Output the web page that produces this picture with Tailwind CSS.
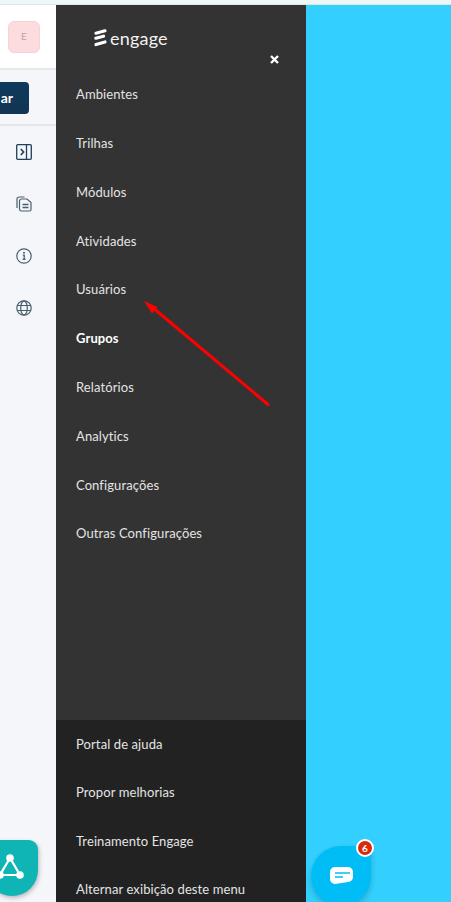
<!DOCTYPE html>
<html lang="pt-BR">
<head>
  <meta charset="UTF-8">
  <title>Engage</title>
  <script src="https://cdn.jsdelivr.net/npm/@tailwindcss/browser@4"></script>
</head>
<body class="h-[902px] w-[451px] overflow-hidden bg-[#33d0ff] font-['Lato',sans-serif] relative">

  <div class="h-[5px] bg-[#eef7f8] border-b border-[#dfe6e8]"></div>

  <div class="flex h-[897px]">
    <!-- Coluna esquerda -->
    <div class="w-[56px] bg-[#f4f6f9] relative overflow-hidden">
      <div class="h-[65px] bg-white border-b-2 border-[#e6e8ec] flex items-center pl-2">
        <div class="w-8 h-8 rounded-md bg-[#fddcdf] border border-[#fbd0d4] flex items-center justify-center text-[10px] text-[#c9a0a5]">E</div>
      </div>
      <div class="h-[56px] border-b-2 border-[#e4e6ea] flex items-center justify-end pr-[27px] pt-[1px]">
        <div class="w-[60px] shrink-0 h-8 rounded bg-gradient-to-b from-[#0e3a5c] to-[#123553] flex items-center justify-end pr-[16px] text-white text-[14px] font-bold">ar</div>
      </div>

      <div class="flex flex-col items-center gap-[36px] mt-[18px] pr-[8px]">
        <svg class="w-4 h-4" viewBox="0 0 16 16" fill="none" stroke="#1f3f5c" stroke-width="1.3">
          <rect x="0.7" y="0.7" width="14.6" height="14.6" rx="1"/>
          <path d="M10.5 0.7V15.3"/>
          <path d="M4.8 5L7.6 8L4.8 11" stroke-width="1.6"/>
        </svg>
        <svg class="w-4 h-4" viewBox="0 0 16 16" fill="none" stroke="#4a5f6e" stroke-width="1.2">
          <path d="M1 12V3a2 2 0 0 1 2-2H8.500"/>
          <path d="M3.500 5a2 2 0 0 1 2-2H11L15 6.500V13.500a1.500 1.500 0 0 1-1.500 1.500H5.500a2 2 0 0 1-2-2Z"/>
          <path d="M6.500 8.500H12.500M6.500 11.500H12.500" stroke-width="1.300"/>
        </svg>
        <svg class="w-4 h-4" viewBox="0 0 16 16" fill="none" stroke="#4a5f6e" stroke-width="1.200">
          <circle cx="8" cy="8" r="7.200"/>
          <circle cx="8" cy="4.800" r="1" fill="#4a5f6e" stroke="none"/>
          <path d="M6.800 7.200H8.200V11.200M6.600 11.300H9.600" stroke-width="1.300"/>
        </svg>
        <svg class="w-4 h-4" viewBox="0 0 16 16" fill="none" stroke="#4a5f6e" stroke-width="1.200">
          <circle cx="8" cy="8" r="7.200"/>
          <ellipse cx="8" cy="8" rx="3.300" ry="7.200"/>
          <path d="M1.200 5.500H14.800M1.200 10.500H14.800"/>
        </svg>
      </div>

      <!-- Botão teal -->
      <div class="absolute left-[-14px] top-[835px] w-[52px] h-[56px] bg-[#0fb5b5] rounded-tl-[10px] rounded-tr-[10px] rounded-bl-[28px] rounded-br-[28px] shadow-[1px_2px_4px_rgba(0,0,0,0.25)] flex items-center justify-center">
        <svg class="w-[30px] h-[30px] mr-[4px]" viewBox="0 0 30 30" fill="none" stroke="white" stroke-width="2.200">
          <path d="M15 5L5 22H25Z"/>
          <circle cx="15" cy="5" r="3.800" fill="white" stroke="none"/>
          <circle cx="5" cy="22" r="3.800" fill="white" stroke="none"/>
          <circle cx="25" cy="22" r="3.800" fill="white" stroke="none"/>
        </svg>
      </div>
    </div>

    <!-- Menu -->
    <div class="w-[250px] bg-[#333333] flex flex-col relative">
      <div class="h-[65px] shrink-0 flex items-center pl-[38px] gap-[3px]">
        <svg class="w-[13px] h-[18px]" viewBox="0 0 13 18" fill="none" stroke="white" stroke-width="3.200" stroke-linecap="round">
          <path d="M2 4.200L11 1.800"/>
          <path d="M1.800 9.200L9.500 7.200"/>
          <path d="M2 15.500L11 13"/>
        </svg>
        <span class="text-[#f2f2f2] text-[18px] leading-none tracking-[0.2px]">engage</span>
      </div>

      <svg class="absolute left-[214px] top-[50px] w-[9px] h-[9px]" viewBox="0 0 9 9" stroke="white" stroke-width="2.400">
        <path d="M1 1L8 8M8 1L1 8"/>
      </svg>

      <nav class="h-[650px] shrink-0 flex flex-col text-[13px] tracking-[0.1px] text-[#e4e4e4] pl-[20px] pt-[0.5px]">
        <a class="h-[48.800px] shrink-0 flex items-center">Ambientes</a>
        <a class="h-[48.800px] shrink-0 flex items-center">Trilhas</a>
        <a class="h-[48.800px] shrink-0 flex items-center">Módulos</a>
        <a class="h-[48.800px] shrink-0 flex items-center">Atividades</a>
        <a class="h-[48.800px] shrink-0 flex items-center">Usuários</a>
        <a class="h-[48.800px] shrink-0 flex items-center font-bold text-white">Grupos</a>
        <a class="h-[48.800px] shrink-0 flex items-center">Relatórios</a>
        <a class="h-[48.800px] shrink-0 flex items-center">Analytics</a>
        <a class="h-[48.800px] shrink-0 flex items-center">Configurações</a>
        <a class="h-[48.800px] shrink-0 flex items-center">Outras Configurações</a>
      </nav>

      <div class="h-[194px] shrink-0 bg-[#222222] flex flex-col text-[13px] tracking-[0.1px] text-[#e4e4e4] pl-[20px]">
        <a class="h-[48.500px] shrink-0 flex items-center">Portal de ajuda</a>
        <a class="h-[48.500px] shrink-0 flex items-center">Propor melhorias</a>
        <a class="h-[48.500px] shrink-0 flex items-center">Treinamento Engage</a>
        <a class="h-[48.500px] shrink-0 flex items-center">Alternar exibição deste menu</a>
      </div>
    </div>

    <div class="flex-1"></div>
  </div>

  <!-- Seta vermelha -->
  <svg class="absolute left-[140px] top-[296px] w-[135px] h-[112px]" viewBox="0 0 135 112" fill="none">
    <path d="M128 108.500L12 11" stroke="#ff0000" stroke-width="3" stroke-linecap="round"/>
    <path d="M4 5L17.500 11L12 17.500Z" fill="#ff0000"/>
  </svg>

  <!-- Botão de chat -->
  <div class="absolute left-[311px] top-[846px] w-[60px] h-[60px] rounded-[30px] rounded-tr-[4px] bg-[#00bdf5] shadow-[0_3px_6px_rgba(0,0,0,0.2)] flex items-center justify-center">
    <svg class="w-[23px] h-[17px] mb-[2px]" viewBox="0 0 23 17">
      <path d="M5 0H18a5 5 0 0 1 5 5V10a5 5 0 0 1-5 5L5 17a5 5 0 0 1-5-5V5a5 5 0 0 1 5-5Z" fill="white"/>
      <path d="M5 6H20M5 10H13" stroke="#00bdf5" stroke-width="1.600"/>
    </svg>
  </div>
  <div class="absolute left-[356px] top-[839px] w-[18px] h-[18px] rounded-full bg-[#d92b0b] border-2 border-white flex items-center justify-center text-white text-[10px] font-bold">6</div>

</body>
</html>
